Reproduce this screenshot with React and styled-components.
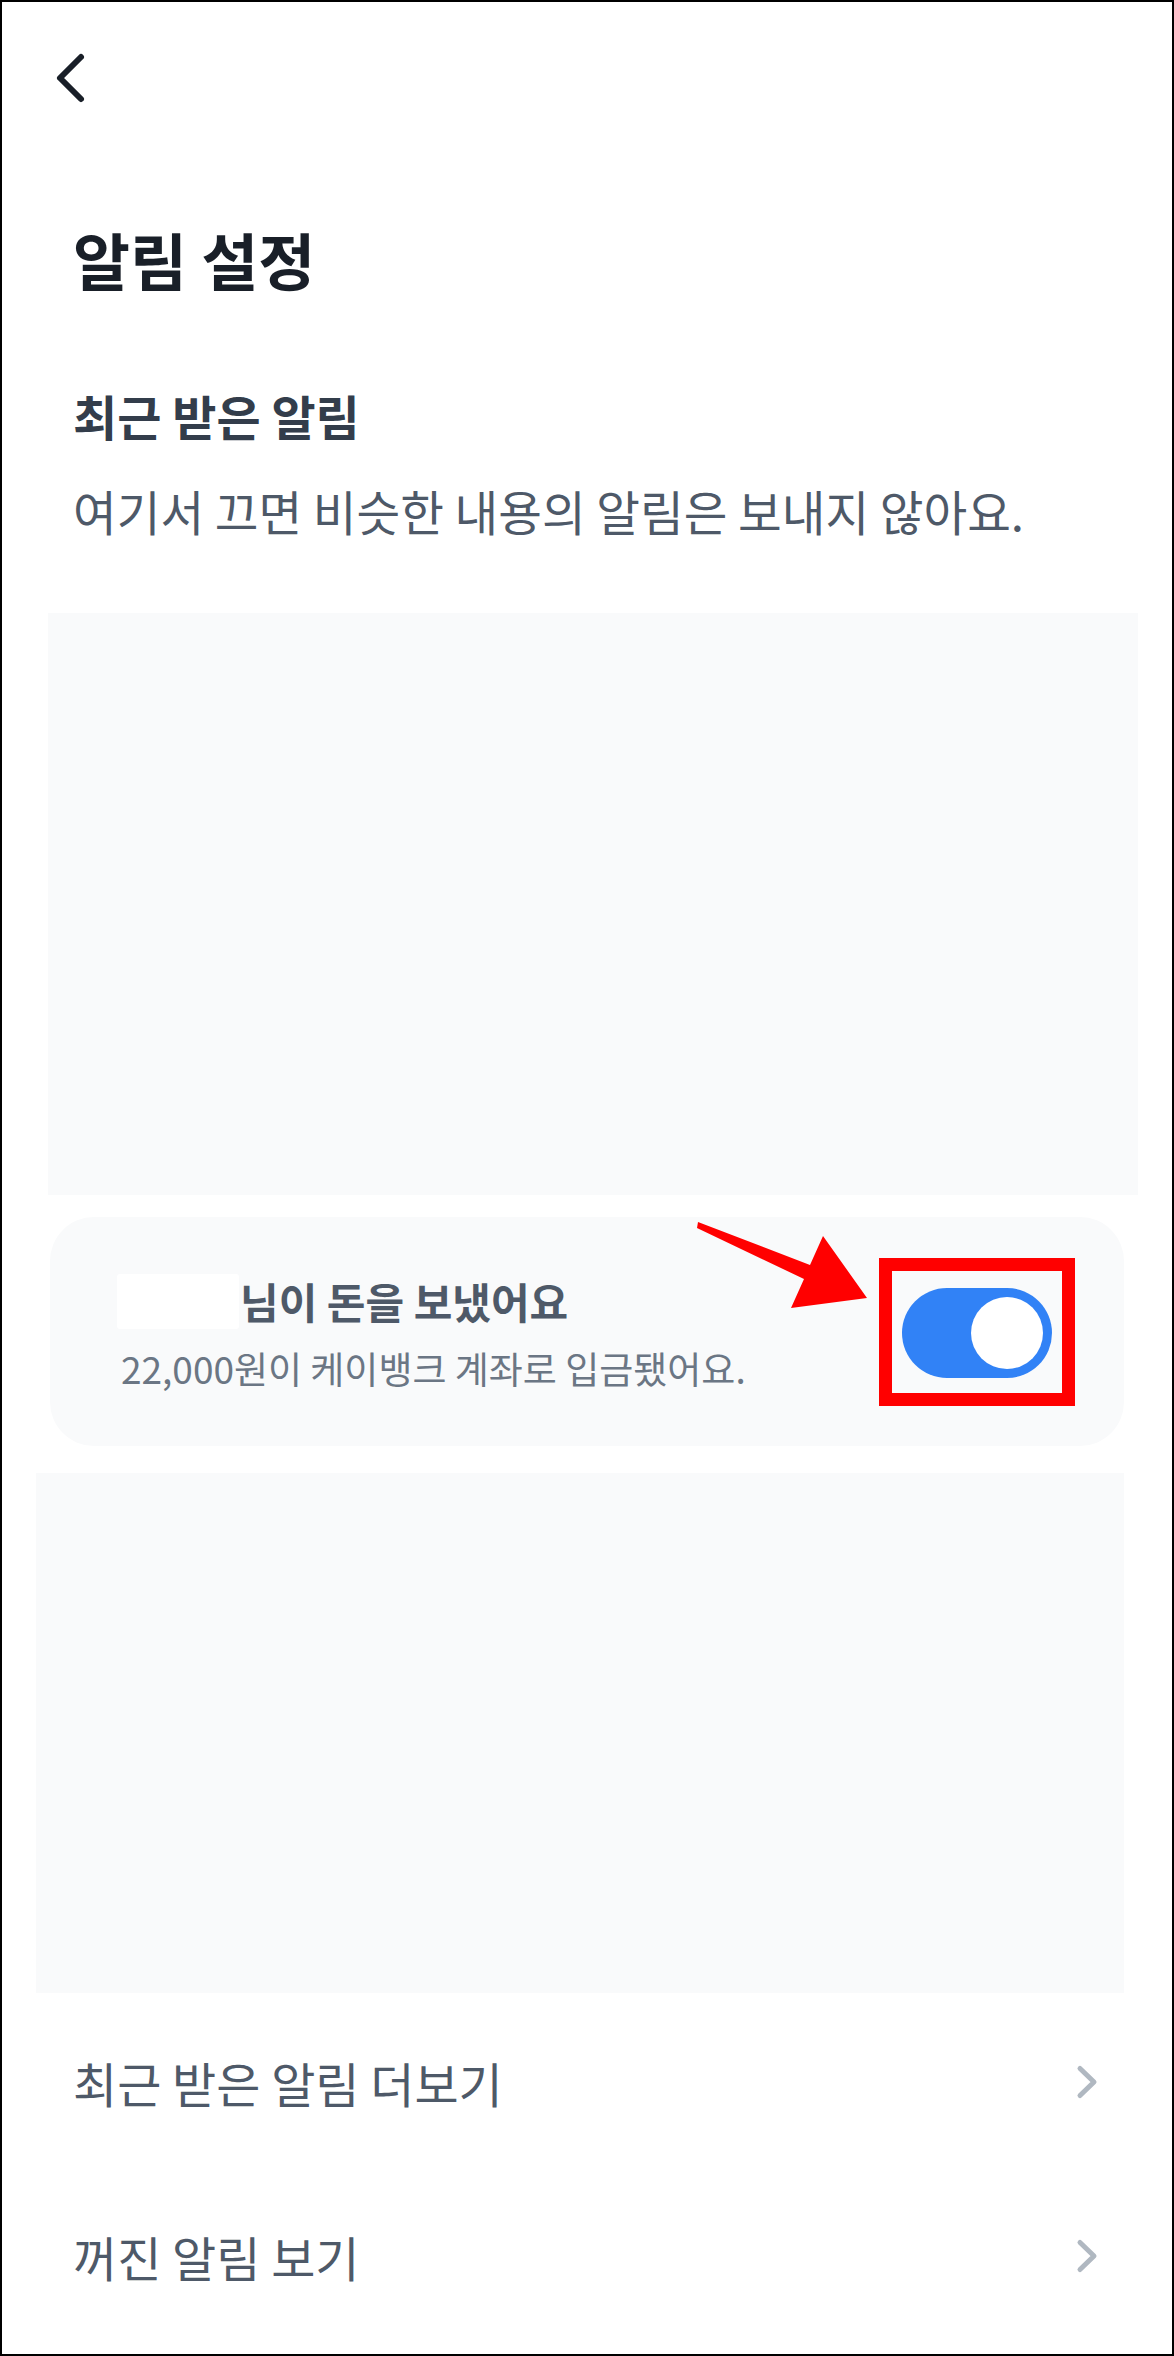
import styled, { createGlobalStyle } from "styled-components";

const GlobalStyle = createGlobalStyle`
  html, body {
    margin: 0;
    padding: 0;
    background: #fff;
  }
  body {
    font-family: "Noto Sans CJK KR", "Noto Sans", sans-serif;
  }
`;

export default function App() {
  return (
    <>
      <GlobalStyle />
      <Page>
        <TopBar>
          <BackButton aria-label="뒤로 가기">
            <svg width="34" height="56" viewBox="0 0 34 56" fill="none">
              <path
                d="M27 7 L6 28 L27 49"
                stroke="#191f28"
                strokeWidth="6"
                strokeLinecap="round"
                strokeLinejoin="round"
              />
            </svg>
          </BackButton>
        </TopBar>

        <Title>알림 설정</Title>
        <SectionHeading>최근 받은 알림</SectionHeading>
        <Description>여기서 끄면 비슷한 내용의 알림은 보내지 않아요.</Description>

        <Placeholder $top={74} $left={46} $width={1090} $height={582} />

        <Card>
          <CardText>
            <CardTitleRow>
              <HiddenName />
              <CardTitle>님이 돈을 보냈어요</CardTitle>
            </CardTitleRow>
            <CardSub>22,000원이 케이뱅크 계좌로 입금됐어요.</CardSub>
          </CardText>

          <Highlight>
            <Toggle $on>
              <Knob />
            </Toggle>
          </Highlight>

          {/* annotation arrow pointing at the toggle */}
          <Arrow width="190" height="100" viewBox="0 0 190 100">
            <polygon
              points="8,5 120,48 133,19 177,81 101,91 114,62 7,11"
              fill="#ff0000"
            />
          </Arrow>
        </Card>

        <Placeholder $top={27} $left={34} $width={1088} $height={520} />

        <MenuList>
          <MenuRow>
            <MenuLabel>최근 받은 알림 더보기</MenuLabel>
            <Chevron />
          </MenuRow>
          <MenuRow>
            <MenuLabel>꺼진 알림 보기</MenuLabel>
            <Chevron />
          </MenuRow>
        </MenuList>
      </Page>
    </>
  );
}

function Chevron() {
  return (
    <svg width="24" height="36" viewBox="0 0 24 36" fill="none">
      <path
        d="M5 4.5 L19 18 L5 31.5"
        stroke="#b0b8c1"
        strokeWidth="5"
        strokeLinecap="round"
        strokeLinejoin="round"
      />
    </svg>
  );
}

const Page = styled.div`
  box-sizing: border-box;
  width: 1174px;
  height: 2356px;
  border: 2px solid #000;
  background: #fff;
  display: flex;
  flex-direction: column;
  overflow: hidden;
`;

const TopBar = styled.div`
  display: flex;
  align-items: center;
  padding: 48px 0 0 52px;
`;

const BackButton = styled.button`
  display: flex;
  padding: 0;
  border: none;
  background: none;
  cursor: pointer;
`;

const Title = styled.h1`
  margin: 119px 0 0 71px;
  font-size: 62px;
  line-height: 68px;
  font-weight: 700;
  color: #191f28;
`;

const SectionHeading = styled.h2`
  margin: 94px 0 0 71px;
  font-size: 48px;
  line-height: 56px;
  font-weight: 700;
  color: #333d4b;
`;

const Description = styled.p`
  margin: 40px 0 0 71px;
  font-size: 47.5px;
  line-height: 56px;
  font-weight: 400;
  color: #4e5968;
`;

const Placeholder = styled.div`
  flex: none;
  margin: ${({ $top }) => $top}px 0 0 ${({ $left }) => $left}px;
  width: ${({ $width }) => $width}px;
  height: ${({ $height }) => $height}px;
  background: #f9fafb;
`;

const Card = styled.div`
  position: relative;
  flex: none;
  box-sizing: border-box;
  margin: 22px 0 0 48px;
  width: 1074px;
  height: 229px;
  padding: 0 49px 0 67px;
  border-radius: 44px;
  background: #f9fafb;
  display: flex;
  align-items: center;
  justify-content: space-between;
`;

const CardText = styled.div`
  display: flex;
  flex-direction: column;
  gap: 17px;
`;

const CardTitleRow = styled.div`
  display: flex;
  align-items: center;
  height: 56px;
`;

const HiddenName = styled.span`
  width: 122px;
  height: 55px;
  border-radius: 3px;
  background: #fff;
`;

const CardTitle = styled.span`
  margin-left: 1px;
  font-size: 42px;
  line-height: 56px;
  font-weight: 600;
  color: #4e5968;
`;

const CardSub = styled.span`
  margin-left: 4px;
  font-size: 37px;
  line-height: 44px;
  font-weight: 400;
  color: #6b7684;
`;

const Highlight = styled.div`
  box-sizing: border-box;
  width: 196px;
  height: 148px;
  border: 13px solid #ff0000;
  padding: 2px 0 0 0;
  display: flex;
  align-items: center;
  justify-content: center;
`;

const Toggle = styled.div`
  width: 150px;
  height: 90px;
  border-radius: 45px;
  background: ${({ $on }) => ($on ? "#3182f6" : "#e5e8eb")};
  display: flex;
  align-items: center;
  justify-content: ${({ $on }) => ($on ? "flex-end" : "flex-start")};
  padding: 0 9px;
  box-sizing: border-box;
`;

const Knob = styled.div`
  width: 72px;
  height: 72px;
  border-radius: 50%;
  background: #fff;
`;

const Arrow = styled.svg`
  position: absolute;
  left: 640px;
  top: 0;
  pointer-events: none;
`;

const MenuList = styled.div`
  margin-top: 2px;
  display: flex;
  flex-direction: column;
`;

const MenuRow = styled.div`
  height: 174px;
  padding: 0 73px 0 71px;
  display: flex;
  align-items: center;
  justify-content: space-between;
  cursor: pointer;
`;

const MenuLabel = styled.span`
  font-size: 48px;
  line-height: 56px;
  font-weight: 400;
  color: #4e5968;
`;
